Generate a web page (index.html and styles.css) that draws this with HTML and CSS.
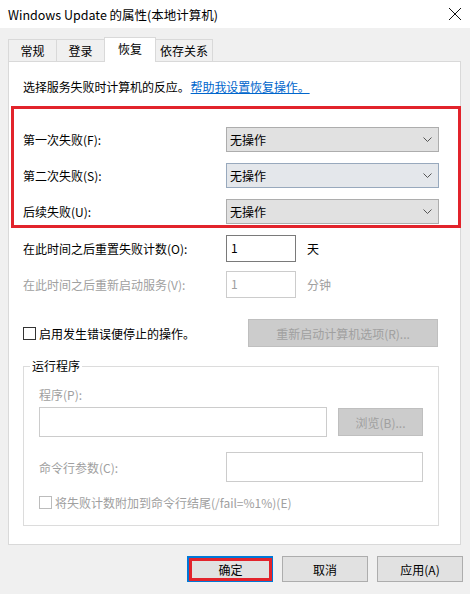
FILE: index.html
```html
<!DOCTYPE html>
<html lang="zh-CN">
<head>
<meta charset="utf-8">
<title>Windows Update 的属性(本地计算机)</title>
<link rel="stylesheet" href="styles.css">
</head>
<body>
<div class="window">
  <div class="titlebar">
    <span class="title">Windows Update 的属性(本地计算机)</span>
    <span class="xbtn" aria-label="关闭"></span>
  </div>
  <div class="tabs">
    <div class="tab t1">常规</div>
    <div class="tab t2">登录</div>
    <div class="tab t3 active">恢复</div>
    <div class="tab t4">依存关系</div>
  </div>
  <div class="panel">
    <div class="intro">选择服务失败时计算机的反应。<a class="link" href="#">帮助我设置恢复操作。</a></div>
    <div class="redbox">
      <div class="frow">
        <span class="flabel">第一次失败(F):</span>
        <div class="select"><span>无操作</span><svg width="9" height="5" viewBox="0 0 9 5"><path d="M0.5 0.5 L4.5 4.5 L8.5 0.5" stroke="#555" fill="none"/></svg></div>
      </div>
      <div class="frow">
        <span class="flabel">第二次失败(S):</span>
        <div class="select hot"><span>无操作</span><svg width="9" height="5" viewBox="0 0 9 5"><path d="M0.5 0.5 L4.5 4.5 L8.5 0.5" stroke="#555" fill="none"/></svg></div>
      </div>
      <div class="frow">
        <span class="flabel">后续失败(U):</span>
        <div class="select"><span>无操作</span><svg width="9" height="5" viewBox="0 0 9 5"><path d="M0.5 0.5 L4.5 4.5 L8.5 0.5" stroke="#555" fill="none"/></svg></div>
      </div>
    </div>
    <div class="nrow first">
      <span class="flabel">在此时间之后重置失败计数(O):</span>
      <div class="numbox">1</div>
      <span class="unit">天</span>
    </div>
    <div class="nrow second disabled">
      <span class="flabel">在此时间之后重新启动服务(V):</span>
      <div class="numbox off">1</div>
      <span class="unit">分钟</span>
    </div>
    <div class="crow">
      <span class="check"></span>
      <span class="ctext">启用发生错误便停止的操作。</span>
      <div class="btn-off wide">重新启动计算机选项(R)...</div>
    </div>
    <div class="group">
      <div class="legend">运行程序</div>
      <div class="glabel">程序(P):</div>
      <div class="prow">
        <div class="tbox prog"></div>
        <div class="btn-off browse">浏览(B)...</div>
      </div>
      <div class="arow">
        <span class="glabel2">命令行参数(C):</span>
        <div class="tbox args"></div>
      </div>
      <div class="kcrow">
        <span class="check off"></span>
        <span class="ktext">将失败计数附加到命令行结尾(/fail=%1%)(E)</span>
      </div>
    </div>
  </div>
  <div class="buttons">
    <div class="btn ok">确定</div>
    <div class="btn cancel">取消</div>
    <div class="btn apply">应用(A)</div>
  </div>
</div>
</body>
</html>
```
FILE: styles.css
```css
* { box-sizing: border-box; }
html, body { margin: 0; padding: 0; }
body {
  width: 470px;
  height: 594px;
  background: #f0f0f0;
  font-family: "Noto Sans CJK SC", "Microsoft YaHei", sans-serif;
  font-size: 12px;
  color: #000;
  overflow: hidden;
}
.window { width: 470px; height: 594px; }
.titlebar {
  height: 28px;
  width: 470px;
  background: #fff;
  display: flex;
  align-items: center;
  padding-left: 8px;
  padding-right: 9px;
}
.title { font-size: 12.5px; white-space: nowrap; }
.xbtn {
  display: block;
  flex: none;
  margin-left: auto;
  width: 12px;
  height: 12px;
  background:
    linear-gradient(45deg, transparent calc(50% - 0.7px), #111 calc(50% - 0.7px), #111 calc(50% + 0.7px), transparent calc(50% + 0.7px)),
    linear-gradient(-45deg, transparent calc(50% - 0.7px), #111 calc(50% - 0.7px), #111 calc(50% + 0.7px), transparent calc(50% + 0.7px));
}

.tabs {
  display: flex;
  align-items: flex-end;
  height: 24px;
  margin-top: 9px;
  margin-left: 8px;
}
.tab {
  height: 22px;
  line-height: 21px;
  text-align: center;
  border: 1px solid #d9d9d9;
  border-bottom: none;
  background: #f0f0f0;
  margin-left: -1px;
}
.t1 { width: 49px; margin-left: 0; }
.t2 { width: 49px; }
.t3 { width: 52px; }
.t4 { width: 58px; }
.tab.active {
  height: 25px;
  line-height: 22px;
  background: #fff;
  margin-bottom: -1px;
  position: relative;
  z-index: 1;
}

.panel {
  margin-left: 8px;
  width: 453px;
  background: #fff;
  border: 1px solid #d9d9d9;
  padding: 0 21px 18px 14px;
}
.intro { margin-top: 15px; line-height: 20px; height: 20px; white-space: nowrap; letter-spacing: -0.1px; }
.link { color: #0066cc; text-decoration: underline; margin-left: 1px; }

.redbox {
  margin: 9px -22px 0 -12px;
  border: 3px solid #e2232b;
  padding: 18px 19px 1px 9px;
}
.frow { display: flex; align-items: center; height: 25px; }
.frow + .frow { margin-top: 11px; }
.flabel { width: 203px; flex: none; white-space: nowrap; }
.select {
  width: 213px;
  height: 25px;
  background: #e1e1e1;
  border: 1px solid #adadad;
  display: flex;
  align-items: center;
  justify-content: space-between;
  padding: 0 6px 0 3px;
}
.select.hot { background: #e4e7eb; border-color: #98a9bd; }
.select svg { display: block; }

.nrow { display: flex; align-items: center; height: 27px; }
.nrow.first { margin-top: 7px; }
.nrow.second { margin-top: 9px; }
.disabled { color: #a0a0a0; }
.numbox {
  width: 70px;
  height: 27px;
  border: 1px solid #7a7a7a;
  padding: 3px 0 0 4px;
  line-height: 18px;
  background: #fff;
}
.numbox.off { border-color: #cccccc; color: #a0a0a0; }
.unit { margin-left: 11px; }

.crow { display: flex; align-items: center; height: 28px; margin-top: 21px; }
.check {
  width: 13px;
  height: 13px;
  border: 1px solid #333;
  background: #fff;
  flex: none;
}
.check.off { border-color: #bcbcbc; }
.ctext { margin-left: 3px; white-space: nowrap; }
.btn-off {
  background: #cccccc;
  border: 1px solid #bfbfbf;
  color: #a0a0a0;
  display: flex;
  align-items: center;
  justify-content: center;
}
.wide { width: 190px; height: 28px; margin-left: auto; margin-right: 1px; }

.group {
  margin-top: 19px;
  border: 1px solid #dcdcdc;
  padding: 0 15px 15px 15px;
  color: #a0a0a0;
}
.legend {
  margin: -9px 0 0 -9px;
  padding: 0 2px;
  width: fit-content;
  background: #fff;
  line-height: 16px;
  color: #000;
}
.glabel { margin-top: 13px; line-height: 16px; }
.prow { display: flex; align-items: center; margin-top: 4px; height: 30px; }
.tbox { border: 1px solid #cccccc; background: #fff; height: 30px; }
.prog { width: 288px; }
.browse { width: 85px; height: 28px; margin-left: 11px; }
.arow { display: flex; align-items: center; margin-top: 15px; height: 30px; }
.args { width: 197px; margin-left: auto; }
.kcrow { display: flex; align-items: center; margin-top: 12px; height: 16px; }
.ktext { margin-left: 3px; white-space: nowrap; }

.buttons {
  display: flex;
  justify-content: flex-end;
  margin-top: 11px;
  padding-right: 7px;
}
.btn {
  width: 86px;
  height: 26px;
  background: #e1e1e1;
  border: 1px solid #adadad;
  display: flex;
  align-items: center;
  justify-content: center;
}
.btn + .btn { margin-left: 9px; }
.btn.ok {
  border: 1px solid #0078d7;
  border-top-width: 2px;
  border-left-width: 2px;
  box-shadow: inset 0 0 0 3px #e2232b;
}
```
